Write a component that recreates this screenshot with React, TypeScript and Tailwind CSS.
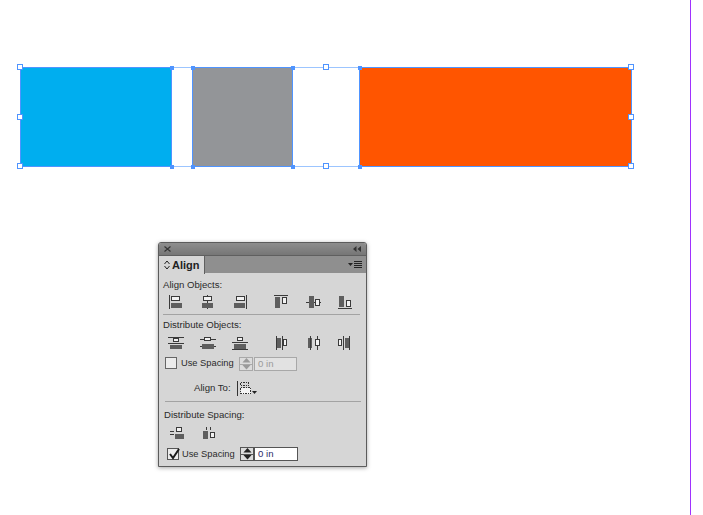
import type { ReactNode } from 'react'

const handles = [
  [17, 64, false], [17, 114, false], [17, 163, false],
  [170, 66, true], [170, 165, true], [191, 66, true], [191, 165, true],
  [291, 66, true], [291, 165, true], [358, 66, true], [358, 165, true],
  [323, 64, false], [323, 163, false],
  [628, 64, false], [628, 114, false], [628, 163, false],
] as const

function Icon({ w, h, className, children }: { w: number; h: number; className?: string; children: ReactNode }) {
  return (
    <svg width={w} height={h} viewBox={`0 0 ${w} ${h}`} className={`block shrink-0 ${className ?? ''}`} shapeRendering="crispEdges">
      {children}
    </svg>
  )
}

// solid dark box
const D = ({ x, y, w, h }: { x: number; y: number; w: number; h: number }) => (
  <rect x={x} y={y} width={w} height={h} fill="#5e5e5e" />
)
// outlined light box
const O = ({ x, y, w, h }: { x: number; y: number; w: number; h: number }) => (
  <rect x={x + 0.5} y={y + 0.5} width={w - 1} height={h - 1} fill="#f2f2f2" stroke="#3a3a3a" />
)
// thin line
const L = ({ x, y, w, h }: { x: number; y: number; w: number; h: number }) => (
  <rect x={x} y={y} width={w} height={h} fill="#3a3a3a" />
)

function Spinner({ disabled }: { disabled?: boolean }) {
  const fill = disabled ? '#9a9a9a' : '#222'
  return (
    <div className={`flex h-[14px] w-[14px] flex-col items-center justify-center gap-[1px] border ${disabled ? 'border-[#a8a8a8]' : 'border-[#555]'} bg-[#dcdcdc]`}>
      <svg width="9" height="5" viewBox="0 0 9 5"><path d="M4.5 0 9 5H0z" fill={fill} /></svg>
      <div className={`h-px w-full ${disabled ? 'bg-[#a8a8a8]' : 'bg-[#555]'}`} />
      <svg width="9" height="5" viewBox="0 0 9 5"><path d="M0 0h9L4.5 5z" fill={fill} /></svg>
    </div>
  )
}

function AlignPanel() {
  return (
    <div className="ml-[158px] mt-[75px] h-[225px] w-[209px] overflow-hidden rounded-t-[3px] border border-[#5c5c5c] bg-[#d6d6d6] font-['Liberation_Sans',sans-serif] text-[9.6px] text-[#2a2a2a] shadow-[0_1px_4px_rgba(0,0,0,0.35)]">
      {/* title bar */}
      <div className="flex h-[12px] items-center justify-between bg-gradient-to-b from-[#8e8e8e] to-[#767676] pl-[5px] pr-[5px]">
        <svg width="7" height="6" viewBox="0 0 7 6"><path d="M.5.5l6 5M6.500.5l-6 5" stroke="#333" strokeWidth="1.100" fill="none" /></svg>
        <svg width="8" height="6" viewBox="0 0 8 6"><path d="M3.500 0v6L0 3zM8 0v6L4.500 3z" fill="#333" /></svg>
      </div>

      {/* tab row */}
      <div className="flex h-[18px] border-t border-[#5f5f5f] bg-[#8f8f8f]">
        <div className="flex h-[18px] w-[46px] items-center gap-[2px] border-r border-[#5f5f5f] bg-[#d6d6d6] pl-[5px]">
          <svg width="6" height="10" viewBox="0 0 6 10" className="shrink-0"><path d="M.5 4 3 1l2.500 3M.5 6 3 9l2.500-3" stroke="#222" fill="none" /></svg>
          <span className="text-[11px] font-bold leading-none text-[#222]">Align</span>
        </div>
        <div className="ml-auto mr-[4px] mt-[5px] flex gap-[1px]">
          <svg width="5" height="3" viewBox="0 0 5 3" className="mt-[2px]"><path d="M0 0h5L2.500 3z" fill="#222" /></svg>
          <div className="flex h-[7px] w-[8px] flex-col justify-between">
            <div className="h-px bg-[#222]" />
            <div className="h-px bg-[#222]" />
            <div className="h-px bg-[#222]" />
            <div className="h-px bg-[#222]" />
          </div>
        </div>
      </div>

      {/* align objects */}
      <div className="h-[12px] pl-[4px] pt-[6px] leading-[12px]">Align Objects:</div>
      <div className="ml-[10px] mt-[10px] flex h-[14px] items-start">
        <Icon w={13} h={14}><L x={0} y={0} w={1} h={14} /><O x={2} y={1} w={9} h={5} /><D x={2} y={8} w={11} h={5} /></Icon>
        <Icon w={12} h={14} className="ml-[20px]"><L x={5} y={0} w={1} h={14} /><O x={1} y={1} w={9} h={5} /><D x={0} y={8} w={11} h={5} /></Icon>
        <Icon w={13} h={14} className="ml-[20px]"><L x={12} y={0} w={1} h={14} /><O x={2} y={1} w={9} h={5} /><D x={0} y={8} w={11} h={5} /></Icon>
        <Icon w={14} h={14} className="ml-[27px]"><L x={0} y={0} w={14} h={1} /><D x={1} y={2} w={5} h={11} /><O x={8} y={2} w={5} h={7} /></Icon>
        <Icon w={15} h={14} className="ml-[18px]"><L x={0} y={7} w={15} h={1} /><D x={3} y={1} w={5} h={12} /><O x={9} y={4} w={5} h={7} /></Icon>
        <Icon w={14} h={14} className="ml-[17px]"><L x={0} y={13} w={14} h={1} /><D x={1} y={1} w={5} h={11} /><O x={8} y={5} w={5} h={7} /></Icon>
      </div>
      <div className="ml-[4px] mr-[6px] mt-[5px] h-px bg-[#a3a3a3]" />

      {/* distribute objects */}
      <div className="h-[12px] pl-[4px] pt-[4px] leading-[12px]">Distribute Objects:</div>
      <div className="ml-[9px] mt-[9px] flex h-[14px] items-start">
        <Icon w={16} h={14}><L x={0} y={1} w={16} h={1} /><O x={5} y={2} w={6} h={4} /><L x={0} y={7} w={16} h={1} /><D x={2} y={9} w={12} h={4} /></Icon>
        <Icon w={16} h={14} className="ml-[16px]"><L x={0} y={3} w={16} h={1} /><O x={4} y={1} w={7} h={4} /><L x={0} y={10} w={16} h={1} /><D x={2} y={8} w={12} h={5} /></Icon>
        <Icon w={16} h={14} className="ml-[16px]"><O x={5} y={1} w={6} h={4} /><L x={0} y={6} w={16} h={1} /><L x={0} y={13} w={16} h={1} /><D x={2} y={8} w={12} h={5} /></Icon>
        <Icon w={12} h={14} className="ml-[28px]"><L x={0} y={0} w={1} h={14} /><D x={1} y={2} w={4} h={10} /><L x={6} y={0} w={1} h={14} /><O x={7} y={3} w={4} h={7} /></Icon>
        <Icon w={12} h={14} className="ml-[20px]"><D x={0} y={2} w={4} h={10} /><L x={2} y={0} w={1} h={14} /><L x={9} y={0} w={1} h={14} /><O x={7} y={3} w={5} h={7} /></Icon>
        <Icon w={12} h={14} className="ml-[18px]"><O x={0} y={3} w={4} h={7} /><L x={5} y={0} w={1} h={14} /><D x={7} y={2} w={4} h={10} /><L x={11} y={0} w={1} h={14} /></Icon>
      </div>

      {/* use spacing, disabled */}
      <div className="ml-[6px] mt-[7px] flex h-[14px] items-start">
        <div className="h-[12px] w-[12px] border border-[#666] bg-[#ececec]" />
        <span className="ml-[4px] -mt-[1px] w-[58px] text-[9.300px] leading-[14px]">Use Spacing</span>
        <Spinner disabled />
        <div className="ml-[1px] flex h-[14px] w-[43px] items-center border border-[#a8a8a8] bg-[#e2e2e2] pl-[3px] text-[#9a9a9a]">0 in</div>
      </div>

      {/* align to */}
      <div className="ml-[35px] mt-[10px] flex h-[15px] items-center">
        <span className="w-[37px]">Align To:</span>
        <svg width="20" height="15" viewBox="0 0 20 15" className="ml-[6px] shrink-0" shapeRendering="crispEdges">
          <rect x="0" y="0" width="1" height="15" fill="#333" />
          <rect x="3.500" y="1.500" width="8" height="3" fill="none" stroke="#333" strokeDasharray="1.500 1" />
          <rect x="3.500" y="6.500" width="10" height="6" fill="#f4f4f4" stroke="#333" strokeDasharray="1.500 1" />
          <path d="M15 10h5l-2.500 3z" fill="#222" shapeRendering="auto" />
        </svg>
      </div>
      <div className="ml-[6px] mr-[5px] mt-[5px] h-px bg-[#a3a3a3]" />

      {/* distribute spacing */}
      <div className="h-[12px] pl-[5px] pt-[7px] leading-[12px]">Distribute Spacing:</div>
      <div className="ml-[11px] mt-[13px] flex h-[12px] items-start">
        <Icon w={14} h={12}><L x={0} y={4} w={4} h={1} /><L x={0} y={7} w={4} h={1} /><O x={6} y={0} w={6} h={5} /><D x={5} y={7} w={9} h={5} /></Icon>
        <Icon w={12} h={12} className="ml-[19px]"><L x={3} y={0} w={1} h={3} /><L x={7} y={0} w={1} h={3} /><D x={0} y={4} w={5} h={8} /><O x={7} y={5} w={5} h={6} /></Icon>
      </div>

      {/* use spacing, enabled */}
      <div className="ml-[8px] mt-[8px] flex h-[14px] items-start">
        <div className="relative mt-[1px] h-[12px] w-[12px] border border-[#555] bg-[#ececec]">
          <svg width="13" height="12" viewBox="0 0 13 12" className="absolute -top-[1px] left-0"><path d="M2 6l3 4 6-9" stroke="#1a1a1a" strokeWidth="2" fill="none" /></svg>
        </div>
        <span className="ml-[3px] w-[58px] text-[9.300px] leading-[14px]">Use Spacing</span>
        <Spinner />
        <div className="flex h-[14px] w-[44px] items-center border border-[#555] bg-white pl-[3px] text-[#2a2a6a]">0 in</div>
      </div>
    </div>
  )
}

export default function App() {
  return (
    <div className="relative h-[515px] w-[703px] overflow-hidden bg-white pt-[67px]">
      {/* page edge guide */}
      <div className="absolute left-[690px] top-0 h-full w-px bg-[#a032ff]" />

      {/* selected objects */}
      <div className="ml-5 flex h-[100px]">
        <div className="w-[152px] border border-[#4f94ff] bg-[#00aeef]" />
        <div className="w-[20px] border-y border-[#9cc5ff]" />
        <div className="w-[101px] border border-[#4f94ff] bg-[#939598]" />
        <div className="w-[66px] border-y border-[#9cc5ff]" />
        <div className="w-[273px] border border-[#4f94ff] bg-[#ff5500]" />
      </div>

      {handles.map(([x, y, solid]) =>
        solid ? (
          <div key={`${x}-${y}`} className="absolute h-[4px] w-[4px] bg-[#4f94ff]" style={{ left: x, top: y }} />
        ) : (
          <div key={`${x}-${y}`} className="absolute h-[6px] w-[6px] border border-[#4f94ff] bg-white" style={{ left: x, top: y }} />
        ),
      )}

      <AlignPanel />
    </div>
  )
}
